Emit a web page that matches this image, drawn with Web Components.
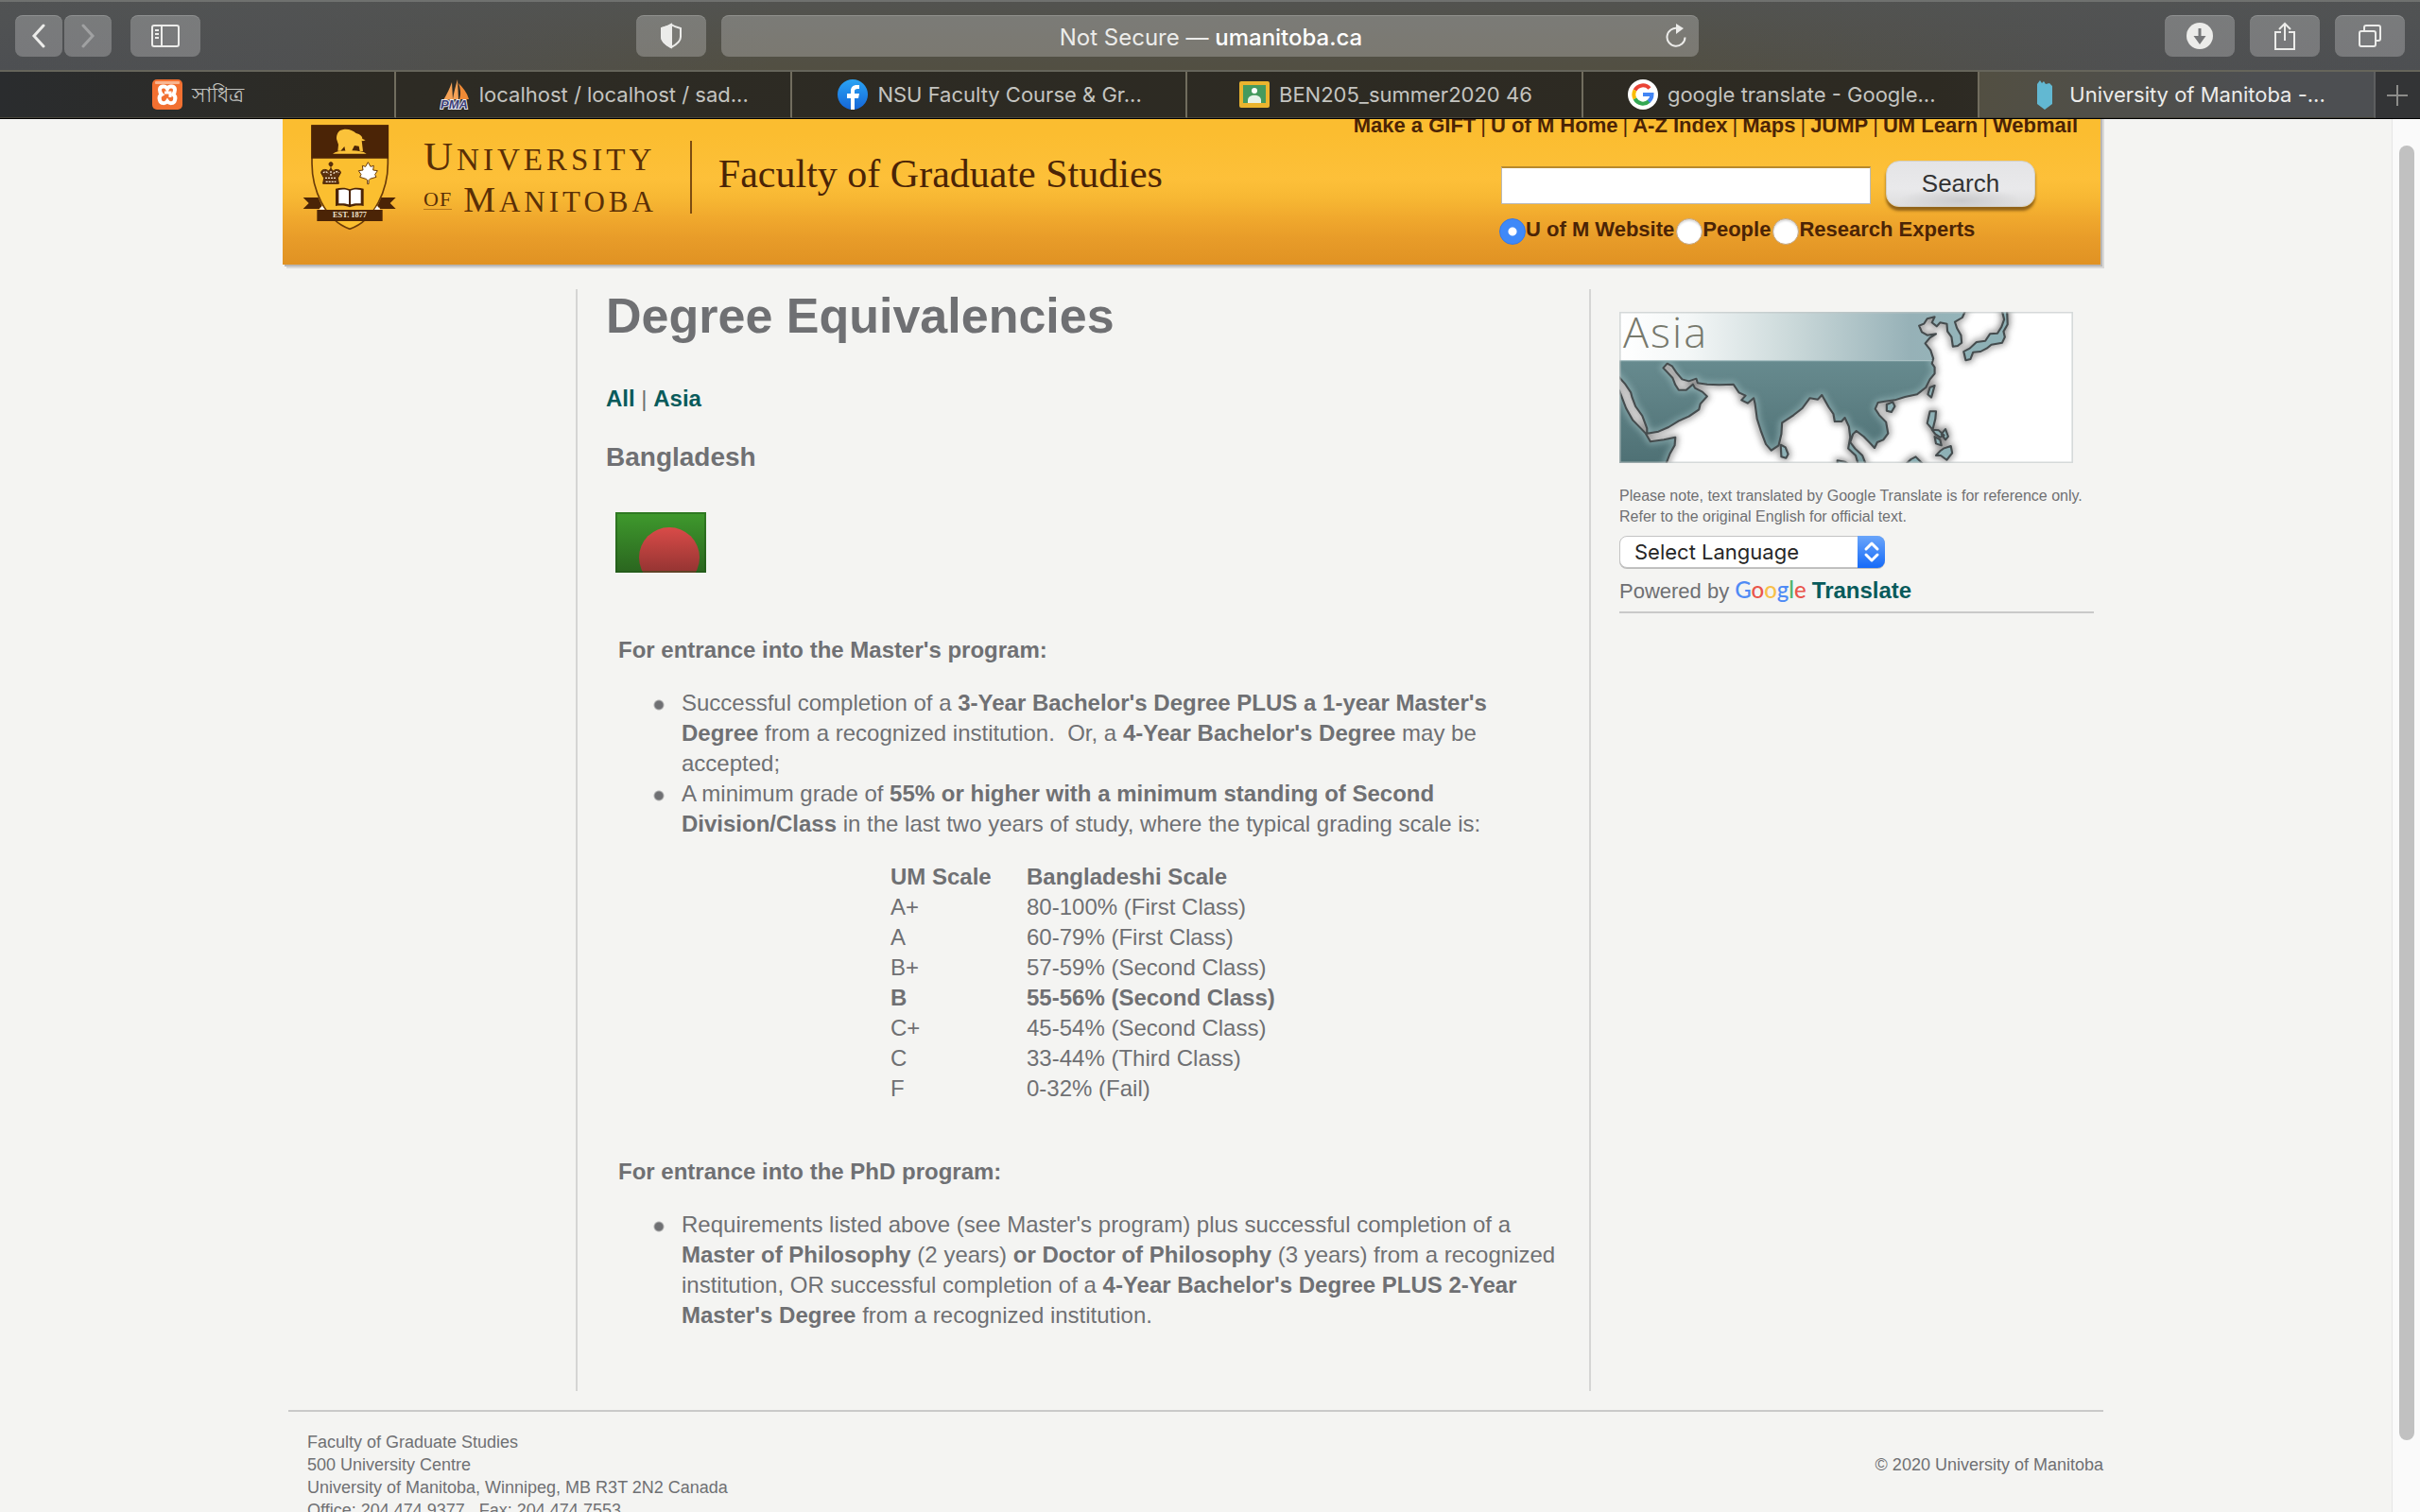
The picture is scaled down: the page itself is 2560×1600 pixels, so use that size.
<!DOCTYPE html>
<html lang="en">
<head>
<meta charset="utf-8">
<title>University of Manitoba - Faculty of Graduate Studies</title>
<style>
  body { margin: 0; font-family: "Liberation Sans", Arial, sans-serif; }
</style>
</head>
<body>
<browser-window>
  <browser-toolbar slot="chrome"></browser-toolbar>
  <tab-strip slot="chrome">
    <browser-tab icon="xampp">সাধিত্র</browser-tab>
    <browser-tab icon="pma">localhost / localhost / sad...</browser-tab>
    <browser-tab icon="facebook">NSU Faculty Course &amp; Gr...</browser-tab>
    <browser-tab icon="classroom">BEN205_summer2020 46</browser-tab>
    <browser-tab icon="google">google translate - Google...</browser-tab>
    <browser-tab icon="manitoba" active>University of Manitoba -...</browser-tab>
  </tab-strip>
  <site-header></site-header>
  <page-columns>
    <degree-article slot="main"></degree-article>
    <side-panel slot="side"></side-panel>
  </page-columns>
  <site-footer></site-footer>
</browser-window>

<script>
function define(name, html, init) {
  const template = document.createElement('template');
  template.innerHTML = html;
  customElements.define(name, class extends HTMLElement {
    constructor() {
      super();
      this.attachShadow({ mode: 'open' }).append(template.content.cloneNode(true));
    }
    connectedCallback() { if (init) init(this); }
  });
}

/* Window frame: chrome on top, scrolled page and its scroll bar below */
define('browser-window', `
<style>
  :host { display: flex; flex-direction: column; height: 100vh; overflow: hidden; background: #f4f4f2; }
  .body { flex: 1; min-height: 0; display: flex; border-top: 1px solid #000; }
  .page { flex: 1; min-width: 0; overflow: hidden; }
  .content { margin: -20px auto 0; width: 100%; max-width: 1920px; }
  .track { flex: none; width: 30px; border-left: 1px solid #e6e6e6; background: #fafafa; display: flex; flex-direction: column; align-items: center; padding: 28px 0 76px; box-sizing: border-box; }
  .thumb { width: 16px; flex: 1; border-radius: 8px; background: #c1c1c1; }
</style>
<slot name="chrome"></slot>
<div class="body">
  <div class="page"><div class="content"><slot></slot></div></div>
  <div class="track"><div class="thumb"></div></div>
</div>`);

define('browser-toolbar', `
<style>
  :host { display: flex; align-items: center; gap: 16px; height: 76px; box-sizing: border-box; padding: 0 16px;
    border-top: 2px solid #6f716f; border-bottom: 2px solid #66655b;
    background: linear-gradient(180deg, rgba(82,84,84,.75), rgba(82,84,84,0)), linear-gradient(90deg, #4d4f52 0, #4f5051 12%, #524f42 32%, #524f42 68%, #4f5051 88%, #4d4f52);
    font-family: Inter, sans-serif; }
  .side { flex: 1; display: flex; gap: 16px; }
  .end { justify-content: flex-end; }
  .pair { display: flex; gap: 2px; margin-right: 4px; }
  .shield { margin-left: auto; }
  button { width: 74px; height: 44px; padding: 0; border: 0; border-radius: 8px; display: flex; align-items: center; justify-content: center;
    background: rgba(255,255,255,.24); box-shadow: inset 0 1px rgba(255,255,255,.16); color: #ececea; font: inherit; }
  .pair button { width: 50px; }
  .off { color: #a0a1a2; }
  .address { flex: 0 1 1034px; padding: 0 12px; font-size: 24px; }
  .address span { flex: 1; text-align: center; padding: 2px 0 0 26px; }
  .address b { font-weight: 500; color: #fff; }
  svg { display: block; fill: none; stroke: currentColor; stroke-width: 2; }
</style>
<div class="side">
  <div class="pair">
    <button aria-label="Back"><svg width="16" height="26" stroke-linecap="round"><path d="M13 2 3 13l10 11" stroke-width="3"/></svg></button>
    <button aria-label="Forward" class="off"><svg width="16" height="26" stroke-linecap="round"><path d="m3 2 10 11L3 24" stroke-width="3"/></svg></button>
  </div>
  <button aria-label="Sidebar"><svg width="30" height="26"><rect x="1" y="2" width="28" height="22" rx="2"/><path d="M11 2v22M4 7h4M4 11h4M4 15h4"/></svg></button>
  <button aria-label="Privacy report" class="shield"><svg width="24" height="28"><path d="M12 2c3 2 6 3 10 4v9c0 5-4 8-10 11C6 23 2 20 2 15V6c4-1 7-2 10-4z"/><path d="M12 2c-3 2-6 3-10 4v9c0 5 4 8 10 11z" fill="currentColor"/></svg></button>
</div>
<button class="address"><span>Not Secure — <b>umanitoba.ca</b></span><svg width="24" height="28"><path d="M14 6a9.500 9.500 0 1 0 7.500 9.500"/><path d="m12 1 8 5-8 6z" fill="currentColor" stroke="none"/></svg></button>
<div class="side end">
  <button aria-label="Downloads"><svg width="28" height="28"><circle cx="14" cy="14" r="14" fill="currentColor" stroke="none"/><path d="M12.500 6h3v8h5L14 23l-6.500-9h5z" fill="#77787a" stroke="none"/></svg></button>
  <button aria-label="Share"><svg width="24" height="32"><path d="M8 12H2v18h20V12h-6M12 21V3M6 9l6-6 6 6"/></svg></button>
  <button aria-label="Show all tabs"><svg width="26" height="26"><rect x="2" y="8" width="17" height="16" rx="2"/><path d="M7 7V4a2 2 0 0 1 2-2h13a2 2 0 0 1 2 2v12a2 2 0 0 1-2 2h-2"/></svg></button>
</div>`);

define('tab-strip', `
<style>
  :host { display: flex; height: 49px; background: linear-gradient(90deg, #2a2c2e 0, #2d2b24 16%, #2d2a22 80%, #333436 98%); font-family: Inter, sans-serif; }
  button { flex: none; width: 47px; border: 0; padding: 0; background: none; color: #8c8c8a; }
  svg { display: block; margin: auto; }
</style>
<slot></slot>
<button aria-label="New tab"><svg width="22" height="22" stroke="currentColor" stroke-width="2"><path d="M11 0v22M0 11h22"/></svg></button>`);

const tabIcons = {
  xampp: '<rect width="32" height="32" rx="5" fill="#f27031"/><rect x="3" y="2" width="26" height="3" rx="1" fill="#f9b48f"/><path d="M8 11c0-4 6-5 8-1 2-4 8-3 8 1 0 3-1 4-2 5 2 1 3 3 2 6-1 4-6 4-8 1-2 3-7 3-8-1-1-3 0-5 2-6-1-1-2-2-2-5z" fill="none" stroke="#fff" stroke-width="4"/><path d="M13 14h6v5" fill="none" stroke="#fff" stroke-width="3"/>',
  pma: '<path d="M4 22C8 15 11 9 13 3l1 18zM14 21c1-7 3-14 5-21l1 21z" fill="#f5a256"/><path d="M20 4c5 5 9 10 11 17H21c2-6 1-11-1-17z" fill="#f08a35"/><text x="1" y="31" font-family="Liberation Sans" font-size="13" font-weight="bold" font-style="italic" fill="#3c3e78" stroke="#e8e8f0" stroke-width="2" paint-order="stroke">PMA</text>',
  facebook: '<defs><linearGradient id="g" x2="0" y2="1"><stop stop-color="#2aa4f4"/><stop offset="1" stop-color="#1566d8"/></linearGradient></defs><circle cx="16" cy="16" r="16" fill="url(#g)"/><path d="M14 32V20h-4v-5h4v-3c0-4 3-6 6-6h3v4h-2c-2 0-3 1-3 2v3h5l-1 5h-4v12z" fill="#fff"/>',
  classroom: '<rect y="2" width="32" height="28" rx="2" fill="#eab42f"/><rect x="4" y="6" width="24" height="19" fill="#459a5e"/><circle cx="16" cy="12" r="3" fill="#fff"/><path d="M9 22c0-7 14-7 14 0v3H9z" fill="#e6f2e9"/>',
  google: '<circle cx="16" cy="16" r="16" fill="#fff"/><g fill="none" stroke-width="4"><path d="M7.500 11.500A9.500 9.500 0 0 1 23 9.500" stroke="#ea4335"/><path d="M7.500 20.500a9.500 9.500 0 0 1 0-9" stroke="#fbbc05"/><path d="M7.500 20.500A9.500 9.500 0 0 0 22.500 23" stroke="#34a853"/><path d="M22 23.300A9.500 9.500 0 0 0 25.500 16H16" stroke="#4285f4"/></g>',
  manitoba: '<path d="M8 5 11 1l2 3 2-2 2 3 4-1 3 3v19l-8 6-8-6z" fill="#62b8d2"/>'
};

define('browser-tab', `
<style>
  :host { flex: 1; min-width: 0; display: flex; align-items: center; justify-content: center; gap: 10px; height: 49px; box-sizing: border-box; padding-left: 2px;
    border-right: 2px solid #716d5e; border-bottom: 1px solid #46443b; color: #c4c4c0; font-size: 22px; line-height: 28px; white-space: nowrap; }
  :host([active]) { color: #ececea; background: linear-gradient(90deg, #524f42, #4d4f52 70%); border-right-color: #5e5f60; }
  svg { flex: none; }
</style>
<svg width="32" height="32"></svg><span><slot></slot></span>`,
  el => { el.shadowRoot.querySelector('svg').innerHTML = tabIcons[el.getAttribute('icon')]; });

/* Coat of arms: bison in chief, crown, maple leaf, book, ribbon */
define('um-crest', `
<style>:host { display: block; } svg { display: block; }</style>
<svg width="100" height="111" viewBox="90 65 300 333" role="img" aria-label="University of Manitoba crest">
  <path d="M120 68h241v120c0 80-40 180-121 208C160 368 120 268 120 188z" fill="#fbbf30" stroke="#6b3c08" stroke-width="5"/>
  <path d="M118 66h245v106H118z" fill="#4b2406"/>
  <path d="M186 157c10-8 30-10 40-9l-3-14-12 14h-9l2-20-6-18c0-16 6-28 22-30 18-2 30 4 40 12 14 4 20 10 20 18l10 4-8 3-4-2 4 34h-10l-3-16-14-2-8 16c20 1 36 3 46 10z" fill="#fbc23a"/>
  <g fill="#5a300e" stroke="#4b2406" stroke-width="3"><path d="M155 252l3-18-9-16c0-12 14-14 24-6l7-8 7 8c10-8 24-6 24 6l-9 16 3 18z"/><circle cx="180" cy="190" r="6"/><path d="M180 196v10"/></g>
  <path d="M156 218c4-6 12-4 16 2M188 220c4-6 14-8 17-2M162 234h36M164 246h32M180 212v18" stroke="#f5e6cf" stroke-width="4" fill="none" stroke-dasharray="6 3"/>
  <path d="M298 184l8 14 10-3-2 14 14 2-8 12 4 8-20 6-4 4v12h-4v-12l-5-4-19-6 4-8-8-12 14-2-2-14 10 3z" fill="#fff" stroke="#6b3c08" stroke-width="3"/>
  <path d="M195 268c16-4 34-4 45 2 11-6 29-6 44-2v55c-16-2-30-2-44 4-14-6-30-6-45-4z" fill="#4b2406"/>
  <path d="M205 272c12-3 24-2 32 2v44c-10-4-20-4-32-3zM275 272c-12-3-24-2-32 2v44c10-4 20-4 32-3z" fill="#fff"/>
  <path d="M92 296h48l14 32h-10v4H92l18-18zM386 296h-46l-14 32h10v4h50l-18-18z" fill="#4b2406"/>
  <path d="m143 334 9-12 9 12zM318 334l9-12 10 12z" fill="#fff"/>
  <path d="M136 335h208v36H136z" fill="#4b2406"/>
  <text x="240" y="360" text-anchor="middle" font-family="Liberation Serif" font-weight="bold" font-size="25" fill="#f2e4cf">EST. 1877</text>
</svg>`);

define('site-header', `
<style>
  :host { display: flex; align-items: flex-start; height: 174px; box-sizing: border-box; padding: 15px 24px 0 21px; margin: 0 3px 0 -6px; color: #4b2406;
    background: linear-gradient(180deg, #fbbd30 0, #fbbd30 20%, #fdc039 48%, #f7b733 60%, #f0a82d 72%, #e89c29 84%, #e09223 100%);
    box-shadow: 2px 2px #b9b7b6, 4px 4px #d9d9d8; }
  um-crest { margin-top: 11px; }
  .wordmark { margin: 25px 0 0 28px; font-family: "Liberation Serif", serif; color: #5a2f06; white-space: nowrap; }
  .wordmark div { line-height: 40px; letter-spacing: 4px; }
  .first { font-size: 43px; }
  .first span { font-size: 33px; line-height: 1; }
  .wordmark .second { font-size: 38px; margin-top: 5px; display: flex; align-items: baseline; gap: 12px; }
  .second .rest { font-size: 31px; line-height: 1; }
  .second .of { font-size: 22px; line-height: 20px; letter-spacing: 1px; border-bottom: 1px solid #b5771c; position: relative; bottom: 6px; }
  .rule { width: 2px; height: 77px; margin: 28px 28px 0 35px; background: #7d4c10; }
  h2 { margin: 39px 0 0; font: 42px/48px "Liberation Serif", serif; white-space: nowrap; }
  .tools { margin-left: auto; display: flex; flex-direction: column; align-items: flex-end; font-size: 22px; line-height: 24px; font-weight: bold; white-space: nowrap; }
  nav { display: flex; gap: 5px; }
  nav i { font-weight: normal; font-style: normal; }
  a { color: inherit; text-decoration: none; }
  form { width: 612px; margin-top: 25px; }
  .row { display: flex; align-items: flex-start; gap: 16px; padding-left: 2px; }
  input[type=text] { width: 391px; height: 40px; box-sizing: border-box; margin: 6px 0 0; border: 1px solid #b9b9b9; border-top: 2px solid #b98a2c; background: #fff; border-radius: 0; }
  button { width: 158px; height: 49px; border: 1px solid #d3d0c8; border-radius: 14px; padding: 0 0 2px; font: 26px/30px "Liberation Sans", sans-serif; color: #333;
    background: radial-gradient(ellipse 70px 14px at 50% 88%, #cacacc, #cacacc00 95%), linear-gradient(#e4e4e6, #e9e9eb 60%, #dededf); box-shadow: 0 4px 3px rgba(90,55,10,.65); }
  .choices { display: flex; gap: 2px; margin-top: 12px; }
  label { display: flex; align-items: flex-start; }
  input[type=radio] { appearance: none; width: 28px; height: 28px; margin: 0; border-radius: 50%; background: #fff; border: 1px solid #c2a683; box-shadow: inset 0 2px 2px #ddd; }
  input[type=radio]:checked { background: radial-gradient(circle, #fff 4px, #3f89f8 5px); border-color: #3478e8; box-shadow: none; }
</style>
<um-crest></um-crest>
<div class="wordmark">
  <div class="first">U<span>NIVERSITY</span></div>
  <div class="second"><span class="of">OF</span><span>M<span class="rest">ANITOBA</span></span></div>
</div>
<div class="rule"></div>
<h2>Faculty of Graduate Studies</h2>
<div class="tools">
  <nav><a href="#">Make a GIFT</a><i>|</i><a href="#">U of M Home</a><i>|</i><a href="#">A-Z Index</a><i>|</i><a href="#">Maps</a><i>|</i><a href="#">JUMP</a><i>|</i><a href="#">UM Learn</a><i>|</i><a href="#">Webmail</a></nav>
  <form onsubmit="return false">
    <div class="row"><input type="text" aria-label="Search terms"><button type="submit">Search</button></div>
    <div class="choices">
      <label><input type="radio" name="scope" checked>U of M Website</label>
      <label><input type="radio" name="scope">People</label>
      <label><input type="radio" name="scope">Research Experts</label>
    </div>
  </form>
</div>`);

define('page-columns', `
<style>
  :host { display: grid; grid-template-columns: 304px minmax(0, 1fr) 544px; margin-top: 26px; }
  .main { border-left: 2px solid #d5d5d4; padding: 0 29px 64px 30px; }
  .side { border-left: 2px solid #d5d5d4; padding: 24px 10px 0 30px; }
</style>
<div></div>
<div class="main"><slot name="main"></slot></div>
<div class="side"><slot name="side"></slot></div>`);

define('degree-article', `
<style>
  :host { display: block; color: #6f7073; font-size: 24px; line-height: 32px; }
  h1 { margin: 0 0 44px; font-size: 52px; line-height: 56px; }
  h2 { margin: 30px 0 42px; font-size: 28px; line-height: 32px; }
  a { color: #085b5b; font-weight: bold; text-decoration: none; }
  svg { display: block; margin-left: 10px; }
  section { padding-left: 13px; }
  .masters { margin-top: 66px; }
  .phd { margin-top: 56px; }
  h3 { margin: 0 0 24px; font-size: 24px; line-height: 32px; }
  ul { margin: 0 0 24px 37px; padding: 0; list-style: none; }
  .phd ul { margin-bottom: 0; }
  li { padding-left: 30px; background: radial-gradient(circle, #6f7073 4px, #6f707300 6px) 0 12px / 12px 12px no-repeat; }
  table { margin-left: 288px; border-collapse: collapse; }
  th, td { padding: 0; text-align: left; }
  th:first-child, td:first-child { width: 144px; }
</style>
<h1>Degree Equivalencies</h1>
<div><a href="#">All</a> | <a href="#">Asia</a></div>
<h2>Bangladesh</h2>
<svg width="96" height="64" role="img" aria-label="Flag of Bangladesh">
  <defs>
    <linearGradient id="green" x2="0" y2="1"><stop stop-color="#3f9a2d"/><stop offset="1" stop-color="#2a651f"/></linearGradient>
    <linearGradient id="red" gradientUnits="userSpaceOnUse" x1="0" y1="16" x2="0" y2="64"><stop stop-color="#d94b48"/><stop offset="1" stop-color="#943432"/></linearGradient>
  </defs>
  <rect width="96" height="64" fill="url(#green)"/>
  <circle cx="57" cy="48" r="32" fill="url(#red)"/>
  <rect x="1" y="1" width="94" height="62" fill="none" stroke="#1c5216" stroke-opacity=".45" stroke-width="2"/>
</svg>
<section class="masters">
  <h3>For entrance into the Master's program:</h3>
  <ul>
    <li>Successful completion of a <b>3-Year Bachelor's Degree PLUS a 1-year Master's Degree</b> from a recognized institution.&nbsp; Or, a <b>4-Year Bachelor's Degree</b> may be accepted;</li>
    <li>A minimum grade of <b>55% or higher with a minimum standing of Second Division/Class</b> in the last two years of study, where the typical grading scale is:</li>
  </ul>
  <table>
    <thead><tr><th>UM Scale</th><th>Bangladeshi Scale</th></tr></thead>
    <tbody>
      <tr><td>A+</td><td>80-100% (First Class)</td></tr>
      <tr><td>A</td><td>60-79% (First Class)</td></tr>
      <tr><td>B+</td><td>57-59% (Second Class)</td></tr>
      <tr><td><b>B</b></td><td><b>55-56% (Second Class)</b></td></tr>
      <tr><td>C+</td><td>45-54% (Second Class)</td></tr>
      <tr><td>C</td><td>33-44% (Third Class)</td></tr>
      <tr><td>F</td><td>0-32% (Fail)</td></tr>
    </tbody>
  </table>
</section>
<section class="phd">
  <h3>For entrance into the PhD program:</h3>
  <ul>
    <li>Requirements listed above (see Master's program) plus successful completion of a <b>Master of Philosophy</b> (2 years) <b>or Doctor of Philosophy</b> (3 years) from a recognized institution, OR successful completion of a <b>4-Year Bachelor's Degree PLUS 2-Year Master's Degree</b> from a recognized institution.</li>
  </ul>
</section>`);

define('asia-map', `
<style>:host { display: block; } svg { display: block; }</style>
<svg width="480" height="160" role="img" aria-label="Asia">
  <svg width="480" height="160" viewBox="64 60 1344 480" preserveAspectRatio="none">
    <defs>
      <linearGradient id="land" x2="0" y2="1"><stop stop-color="#6f979c"/><stop offset=".45" stop-color="#63868a"/><stop offset="1" stop-color="#4d6f73"/></linearGradient>
      <linearGradient id="fade" gradientUnits="userSpaceOnUse" x1="64" y1="0" x2="1080" y2="0"><stop stop-color="#fff"/><stop offset=".2" stop-color="#f4f7f7"/><stop offset=".5" stop-color="#cbd9da"/><stop offset=".85" stop-color="#96b1b7"/><stop offset="1" stop-color="#94b4b9"/></linearGradient>
      <filter id="glow" x="-5%" y="-10%" width="110%" height="120%"><feGaussianBlur stdDeviation="11"/></filter>
      <path id="coast" d="M40 40H1096L1080 78 1058 92 1064 112 1076 134 1078 158 1066 168 1052 170 1048 140 1036 122 1034 98 1014 94 1004 106 990 94 998 76 976 82 966 98 952 104 960 124 976 134 1002 130 984 142 970 160 986 182 994 208 990 224 998 236 998 256 984 274 972 300 946 322 910 330 880 340 850 344 830 348 822 368 834 388 854 410 860 446 846 466 828 474 820 492 806 476 788 456 766 438 756 448 748 474 762 494 784 516 800 560 776 560 764 516 742 494 748 458 744 424 732 396 722 408 702 408 698 384 684 362 664 324 652 338 628 334 606 366 580 388 546 412 544 448 536 484 514 500 498 480 484 440 472 400 466 352 462 334 444 350 426 340 438 326 418 316 402 290 360 292 324 290 296 286 292 272 270 280 250 274 234 254 220 232 206 224 194 238 208 254 222 270 230 292 240 308 262 308 282 290 288 302 310 314 324 328 304 352 300 370 270 392 240 406 210 426 180 440 146 446 146 430 132 390 112 360 102 332 98 316 82 290 64 268 40 240V280L64 310 84 366 104 404 128 430 142 446 156 472 196 466 230 458 228 484 214 510 196 560H40Z"/>
      <g id="isles"><path d="M1196 50 1204 84 1196 108 1184 128 1162 130 1148 152 1122 156 1102 176 1084 186 1090 214 1104 210 1112 188 1134 186 1152 176 1166 164 1198 158 1206 140 1202 122 1214 100 1212 50Z"/><path d="m998 294-14 6-6 22 10 10zM856 354l18-8 6 14-10 18-14-4zM984 376h18l-2 24-8 34-16-20zM990 434l20 2 16 16-12 6-14-10zM998 456l16 10 4 18-16-6zM1030 432l8 24-8 10-12-18zM1024 494l22-8 4 22-16 22-18-14-14 0 12-14zM542 482l14 8 8 22-6 12-14-4zM710 544v-12l22 4 12 8zM912 544l16-16 14-8 22 24z"/></g>
      <clipPath id="clip"><use href="#coast"/></clipPath>
    </defs>
    <rect x="64" y="60" width="1344" height="480" fill="#fff"/>
    <g filter="url(#glow)" fill="none" stroke="#555" stroke-width="14" opacity=".75"><use href="#coast"/><use href="#isles"/></g>
    <use href="#coast" fill="url(#land)"/>
    <g clip-path="url(#clip)"><use href="#coast" fill="none" stroke="#a9c9cc" stroke-width="14" filter="url(#glow)" opacity=".7"/><rect x="64" y="60" width="1080" height="156" fill="url(#fade)"/></g>
    <g fill="none" stroke="#454c4e" stroke-width="6" stroke-linejoin="round"><use href="#coast"/><use href="#isles" fill="#8eb1b6"/></g>
    <path d="M64 60H940V216H64z" fill="url(#fade)"/>
    <path d="M64 215H990" stroke="#a8c0c3" stroke-width="4"/>
    <rect x="66" y="62" width="1340" height="476" fill="none" stroke="#bfc4c4" stroke-opacity=".65" stroke-width="5"/>
  </svg>
  <text x="4" y="38" font-family="Open Sans" font-weight="300" font-size="45" letter-spacing="2" fill="#77796d">Asia</text>
</svg>`);

define('side-panel', `
<style>
  :host { display: block; color: #6f7073; }
  p { margin: 24px 0 0; font-size: 16px; line-height: 22px; }
  .picker { position: relative; width: 281px; height: 34px; margin-top: 9px; }
  select { appearance: none; width: 100%; height: 100%; padding: 0 48px 0 15px; border: 1px solid #c4c4c4; border-radius: 8px; background: #fff; color: #262626; font: 22px/28px Inter, sans-serif; box-shadow: 0 1px #bbb; }
  .picker svg { position: absolute; right: 0; top: 0; pointer-events: none; }
  .powered { display: flex; align-items: baseline; gap: 6px; margin-top: 7px; padding-bottom: 5px; border-bottom: 2px solid #c9c9c9; font-size: 22px; line-height: 32px; }
  a { display: contents; color: #085b5b; font-size: 24px; font-weight: bold; text-decoration: none; }
  .google { font-family: Lato, sans-serif; font-size: 24px; font-weight: 500; }
</style>
<asia-map></asia-map>
<p>Please note, text translated by Google Translate is for reference only. Refer to the original English for official text.</p>
<div class="picker">
  <select aria-label="Select Language"><option>Select Language</option></select>
  <svg width="29" height="34"><defs><linearGradient id="b" x2="0" y2="1"><stop stop-color="#6aa5fa"/><stop offset="1" stop-color="#156af8"/></linearGradient></defs><path d="M0 0h21a8 8 0 0 1 8 8v18a8 8 0 0 1-8 8H0z" fill="url(#b)"/><path d="m9 14 6-6 6 6M9 20l6 6 6-6" fill="none" stroke="#fff" stroke-width="3" stroke-linecap="round" stroke-linejoin="round"/></svg>
</div>
<div class="powered"><span>Powered by</span><a href="#"><span class="google"><span style="color:#4f8bf5">G</span><span style="color:#e9564b">o</span><span style="color:#f8c04a">o</span><span style="color:#4f8bf5">g</span><span style="color:#4fb26c">l</span><span style="color:#e9564b">e</span></span><span>Translate</span></a></div>`);

define('site-footer', `
<style>
  :host { display: flex; justify-content: space-between; margin-top: 20px; padding: 20px 0 0 20px; border-top: 2px solid #c9c9c9; color: #6f7073; font-size: 18px; line-height: 24px; }
  address { font-style: normal; }
  span { margin-top: 24px; }
</style>
<address>Faculty of Graduate Studies<br>500 University Centre<br>University of Manitoba, Winnipeg, MB R3T 2N2 Canada<br>Office: 204.474.9377&nbsp;&nbsp; Fax: 204.474.7553</address>
<span>© 2020 University of Manitoba</span>`);
</script>
</body>
</html>
